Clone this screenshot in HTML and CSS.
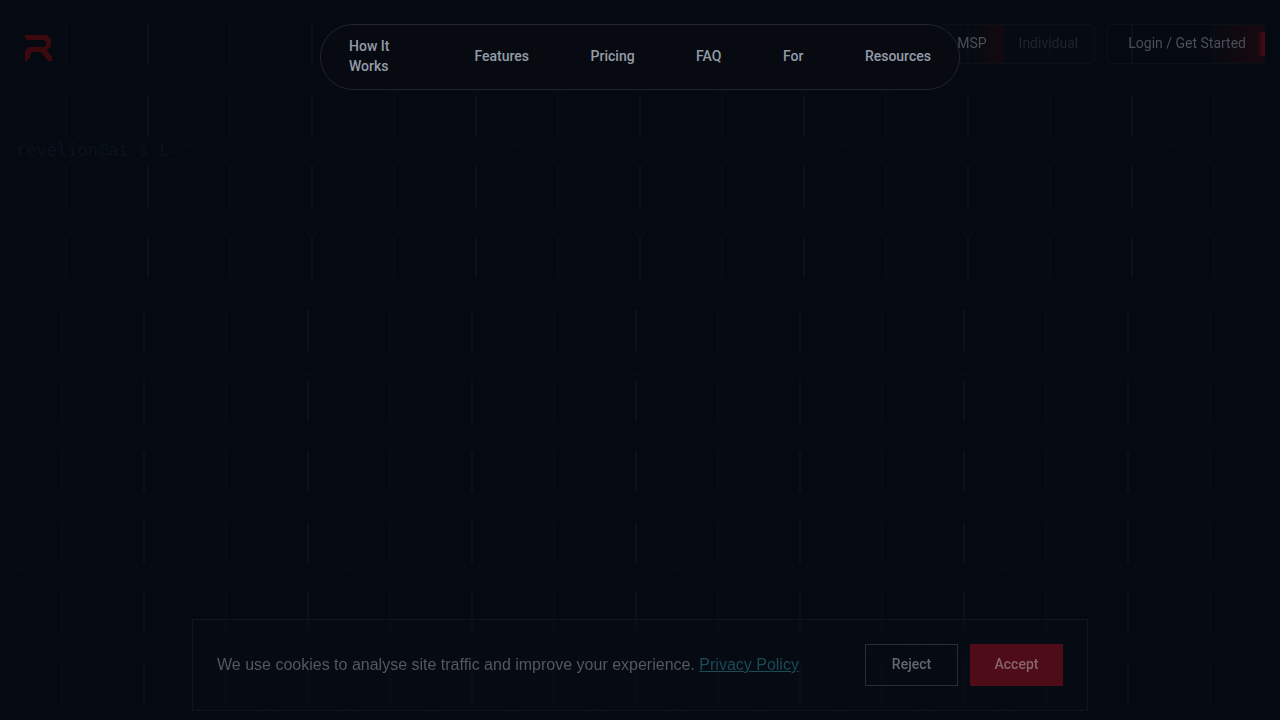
FILE: index.html
```html
<!DOCTYPE html>
<html lang="en">
<head>
<meta charset="utf-8">
<meta name="viewport" content="width=device-width, initial-scale=1">
<title>Revelion</title>
<link rel="stylesheet" href="styles.css">
</head>
<body>
<svg class="backdrop" aria-hidden="true">
  <defs>
    <pattern id="hex-top" x="25" y="24" width="164" height="71" patternUnits="userSpaceOnUse">
      <path class="hex-slope" d="M0 49L41 69L82 49L123 69L164 49"/>
      <path class="hex-faint" d="M41 0V41"/>
      <path class="hex-line" d="M123 0V41"/>
    </pattern>
    <pattern id="hex-bottom" x="21" y="310" width="164" height="141" patternUnits="userSpaceOnUse">
      <path class="hex-slope" d="M0 46L41 66L82 46L123 66L164 46M0 117L41 137L82 117L123 137L164 117"/>
      <path class="hex-faint" d="M41 0V41M41 71V112"/>
      <path class="hex-line" d="M123 0V41M123 71V112"/>
    </pattern>
  </defs>
  <rect width="100%" height="300" fill="url(#hex-top)"/>
  <rect y="300" width="100%" height="100%" fill="url(#hex-bottom)"/>
</svg>
<header class="header">
  <a class="logo" href="#" aria-label="Revelion">
    <svg width="30" height="28" viewBox="0 0 30 28" aria-hidden="true">
      <path d="M0 1H23L27 5V12L23 16L28 23V27H24L17 18H9L6 20V24L1 28V17L5 13H20L22 11V8L20 6H3Z"/>
    </svg>
  </a>
  <div class="actions">
    <div class="audience">
      <button class="audience-option selected" type="button">MSP</button>
      <button class="audience-option" type="button">Individual</button>
    </div>
    <a class="login" href="#">Login / Get Started</a>
  </div>
  <nav class="nav" aria-label="Main">
    <a class="nav-link nav-wrap" href="#">How It Works</a>
    <a class="nav-link" href="#">Features</a>
    <a class="nav-link" href="#">Pricing</a>
    <a class="nav-link" href="#">FAQ</a>
    <a class="nav-link" href="#">For</a>
    <a class="nav-link" href="#">Resources</a>
  </nav>
</header>
<main class="main">
  <p class="prompt">revelion@ai $ L_</p>
</main>
<section class="cookies" aria-label="Cookie consent">
  <p class="cookies-text">We use cookies to analyse site traffic and improve your experience. <a class="policy" href="#">Privacy Policy</a></p>
  <div class="cookies-actions">
    <button class="button" type="button">Reject</button>
    <button class="button accept" type="button">Accept</button>
  </div>
</section>
</body>
</html>
```

FILE: styles.css
```css
* { box-sizing: border-box; }

body {
  margin: 0;
  min-height: 100vh;
  display: flex;
  flex-direction: column;
  background: #050a12;
  color: #949ba8;
  font-family: Roboto, "Liberation Sans", sans-serif;
  font-size: 14px;
  line-height: 20px;
}

a { color: inherit; text-decoration: none; }
p { margin: 0; }
button { font: inherit; color: inherit; cursor: pointer; }

.backdrop {
  position: fixed;
  inset: 0;
  width: 100%;
  height: 100%;
  z-index: -1;
}
.hex-line,
.hex-faint,
.hex-slope { fill: none; }
.hex-line { stroke: #0b1118; stroke-width: 2; }
.hex-faint { stroke: #080e15; stroke-width: 2; }
.hex-slope { stroke: #080d15; }

.header {
  position: relative;
  display: flex;
  justify-content: space-between;
  align-items: flex-start;
  padding: 24px 15px 0 24px;
}
.logo { padding-top: 10px; }
.logo svg { display: block; fill: #3c090f; }

.nav {
  position: absolute;
  top: 24px;
  left: 25%;
  width: 50%;
  display: flex;
  justify-content: space-between;
  align-items: center;
  padding: 11px 28px 13px;
  border: 1px solid #20262c;
  border-radius: 33px;
  background: #070b11;
  font-weight: 500;
}
.nav-wrap { width: 64px; }

.actions { display: flex; gap: 12px; color: #4b4f57; }
.audience {
  display: flex;
  border: 1px solid #0b1118;
  border-radius: 4px;
  background: #080c1480;
}
.audience-option {
  padding: 0 16px 2px;
  border: 0;
  background: none;
  color: #20252d;
}
.audience-option.selected {
  background: linear-gradient(90deg, #050a1200 50%, #160910);
  color: #4b4f57;
}
.login {
  padding: 8px 19px 10px 20px;
  border: 1px solid #0b1118;
  border-right: 0;
  border-radius: 4px;
  background:
    linear-gradient(90deg, #2a0911, #480b16) right center / 6px 24px no-repeat,
    linear-gradient(90deg, #060b1300 60%, #1b0910);
}

.main { flex: 1; padding: 76px 16px 0; }
.prompt {
  color: #0a131b;
  font-family: "DejaVu Sans Mono", monospace;
  font-size: 17px;
}

.cookies {
  width: 70%;
  margin: 0 auto 9px;
  padding: 24px;
  display: flex;
  justify-content: space-between;
  align-items: center;
  gap: 24px;
  border: 1px solid #10161d;
  background: #080c1380;
}
.cookies-text {
  color: #54585f;
  font-family: "Liberation Sans", Roboto, sans-serif;
  font-size: 16px;
}
.policy { color: #1a4b57; text-decoration: underline; }
.cookies-actions { display: flex; gap: 12px; }
.button {
  min-width: 93px;
  padding: 9px 22px 11px;
  border: 1px solid #292e35;
  background: none;
  color: #63676e;
  font-weight: 500;
}
.accept {
  border-color: #4e0b18;
  background: #4e0b18;
  color: #88646b;
}
```
